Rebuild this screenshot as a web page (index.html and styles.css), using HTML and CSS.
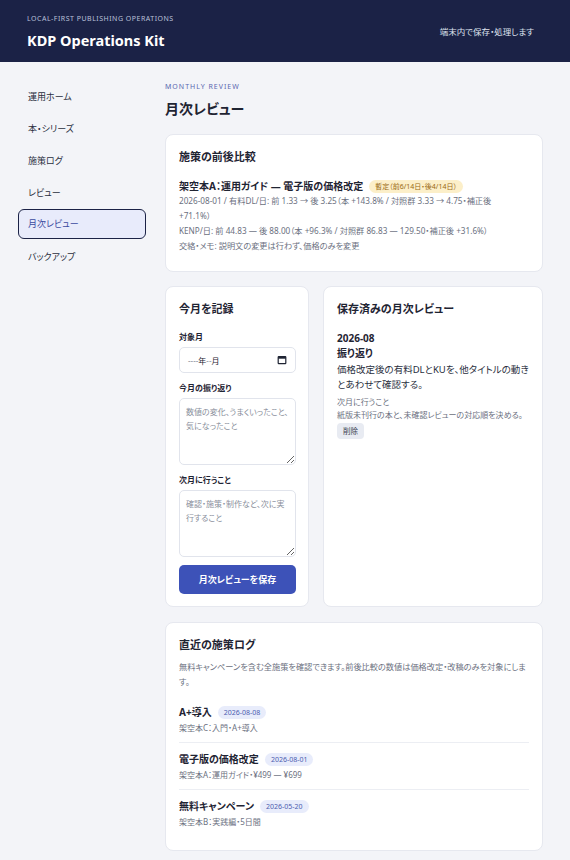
FILE: index.html
```html
<!DOCTYPE html>
<html lang="ja">
<head>
    <meta charset="UTF-8">
    <meta name="viewport" content="width=device-width, initial-scale=1.0">
    <title>KDP Operations Kit</title>
    <link rel="stylesheet" href="styles.css">
</head>
<body>
    <header class="topbar">
        <div class="brand">
            <p class="brand-eyebrow">LOCAL-FIRST PUBLISHING OPERATIONS</p>
            <h1 class="brand-title">KDP Operations Kit</h1>
        </div>
        <p class="topbar-note">端末内で保存・処理します</p>
    </header>

    <div class="layout">
        <nav class="sidebar">
            <a class="nav-item" href="#">運用ホーム</a>
            <a class="nav-item" href="#">本・シリーズ</a>
            <a class="nav-item" href="#">施策ログ</a>
            <a class="nav-item" href="#">レビュー</a>
            <a class="nav-item active" href="#">月次レビュー</a>
            <a class="nav-item" href="#">バックアップ</a>
        </nav>

        <main class="content">
            <p class="eyebrow">MONTHLY REVIEW</p>
            <h2 class="page-title">月次レビュー</h2>

            <section class="card compare">
                <h3 class="card-title">施策の前後比較</h3>
                <div class="compare-head">
                    <strong>架空本A：運用ガイド — 電子版の価格改定</strong>
                    <span class="badge warn">暫定（前6/14日・後4/14日）</span>
                </div>
                <p class="meta">2026-08-01 / 有料DL/日: 前 1.33 → 後 3.25（本 +143.8% / 対照群 3.33 → 4.75・補正後<br>+71.1%）</p>
                <p class="meta">KENP/日: 前 44.83 — 後 88.00（本 +96.3% / 対照群 86.83 — 129.50・補正後 +31.6%）</p>
                <p class="meta">交絡・メモ: 説明文の変更は行わず、価格のみを変更</p>
            </section>

            <div class="review-row">
                <section class="card record">
                    <h3 class="card-title">今月を記録</h3>
                    <label class="field-label" for="month">対象月</label>
                    <div class="month-field" id="month" tabindex="0">
                        <span class="month-text"><span class="dash">----</span>年<span class="dash">--</span>月</span>
                        <svg width="10" height="10" viewBox="0 0 10 10" aria-hidden="true">
                            <rect x="1.2" y="1.7" width="7.6" height="7" rx="0.6" fill="none" stroke="#1f2433" stroke-width="1.2"/>
                            <rect x="1.2" y="1.7" width="7.6" height="2" fill="#1f2433"/>
                        </svg>
                    </div>
                    <label class="field-label" for="looking-back">今月の振り返り</label>
                    <textarea id="looking-back" placeholder="数値の変化、うまくいったこと、気になったこと"></textarea>
                    <label class="field-label" for="next-month">次月に行うこと</label>
                    <textarea id="next-month" placeholder="確認・施策・制作など、次に実行すること"></textarea>
                    <button class="primary-btn" type="button">月次レビューを保存</button>
                </section>

                <section class="card saved">
                    <h3 class="card-title">保存済みの月次レビュー</h3>
                    <p class="saved-month">2026-08</p>
                    <p class="saved-label">振り返り</p>
                    <p class="saved-text">価格改定後の有料DLとKUを、他タイトルの動きとあわせて確認する。</p>
                    <p class="saved-sub">次月に行うこと</p>
                    <p class="saved-sub">紙版未刊行の本と、未確認レビューの対応順を決める。</p>
                    <button class="small-btn" type="button">削除</button>
                </section>
            </div>

            <section class="card log">
                <h3 class="card-title">直近の施策ログ</h3>
                <p class="meta desc">無料キャンペーンを含む全施策を確認できます。前後比較の数値は価格改定・改稿のみを対象にします。</p>
                <ul class="log-list">
                    <li class="log-item">
                        <div class="log-head"><strong>A+導入</strong><span class="badge date">2026-08-08</span></div>
                        <p class="log-sub">架空本C：入門・A+導入</p>
                    </li>
                    <li class="log-item">
                        <div class="log-head"><strong>電子版の価格改定</strong><span class="badge date">2026-08-01</span></div>
                        <p class="log-sub">架空本A：運用ガイド・¥499 — ¥699</p>
                    </li>
                    <li class="log-item">
                        <div class="log-head"><strong>無料キャンペーン</strong><span class="badge date">2026-05-20</span></div>
                        <p class="log-sub">架空本B：実践編・5日間</p>
                    </li>
                </ul>
            </section>
        </main>
    </div>
</body>
</html>
```

FILE: styles.css
```css
* {
    box-sizing: border-box;
}
body {
    margin: 0;
    font-family: "Noto Sans", "Noto Sans CJK JP", sans-serif;
    font-feature-settings: "palt";
    background-color: #f3f4f8;
    color: #1f2433;
}
p, h1, h2, h3, ul {
    margin: 0;
    padding: 0;
}
.topbar {
    height: 62px;
    padding: 0 36px 0 27px;
    background-color: #1b2246;
    color: white;
    display: flex;
    align-items: center;
    justify-content: space-between;
}
.brand-eyebrow {
    font-size: 7px;
    line-height: 10px;
    letter-spacing: 0.5px;
    color: #b9c0d9;
    margin-top: 2px;
}
.brand-title {
    font-size: 14.5px;
    line-height: 22px;
    font-weight: 700;
    margin-top: 5px;
}
.topbar-note {
    font-size: 8.5px;
    color: #dfe3ef;
}
.layout {
    display: grid;
    grid-template-columns: 160px 1fr;
}
.sidebar {
    padding: 18px 14px 0 18px;
    display: flex;
    flex-direction: column;
}
.nav-item {
    display: block;
    height: 32px;
    line-height: 32px;
    padding: 0 9px;
    font-size: 9px;
    color: #2a2f3e;
    text-decoration: none;
    border: 1.5px solid transparent;
    border-radius: 6px;
}
.nav-item.active {
    height: 30px;
    line-height: 27px;
    margin: 1px 0;
    border-color: #1b2246;
    background-color: #e8ebfb;
    color: #3b4aa0;
}
.content {
    padding: 20px 27px 20px 5px;
}
.eyebrow {
    font-size: 7px;
    line-height: 10px;
    letter-spacing: 1px;
    color: #5a67b0;
}
.page-title {
    font-size: 14px;
    line-height: 22px;
    font-weight: 700;
    margin: 6px 0 14px;
}
.card {
    background-color: white;
    border: 1px solid #e6e8ef;
    border-radius: 8px;
    padding: 14px 13px;
}
.card-title {
    font-size: 11px;
    line-height: 16px;
    font-weight: 700;
}
.compare {
    padding-bottom: 18px;
}
.compare-head {
    display: flex;
    align-items: center;
    gap: 6px;
    margin-top: 14px;
    font-size: 10px;
    line-height: 14px;
}
.badge {
    display: inline-block;
    font-size: 7px;
    line-height: 11px;
    padding: 1px 6px;
    border-radius: 8px;
}
.badge.warn {
    background-color: #fcefc9;
    color: #9a6a12;
}
.badge.date {
    background-color: #e8ecfb;
    color: #4b5cb0;
}
.meta {
    font-size: 8.2px;
    line-height: 15px;
    color: #6b7080;
}
.review-row {
    display: grid;
    grid-template-columns: 144px 1fr;
    gap: 14px;
    margin: 14px 0 15px;
}
.record {
    display: flex;
    flex-direction: column;
    padding: 14px 12px 12px 13px;
}
.field-label {
    font-size: 8px;
    line-height: 12px;
    font-weight: 700;
    margin: 9px 0 4px;
}
.record .card-title + .field-label {
    margin-top: 14px;
}
.month-field {
    display: flex;
    align-items: center;
    justify-content: space-between;
    height: 26px;
    padding: 0 8px;
    border: 1px solid #e1e4ec;
    border-radius: 5px;
    font-size: 8px;
    color: #1f2433;
}
.month-field .dash {
    color: #8a8f9c;
}
textarea {
    height: 67px;
    resize: vertical;
    padding: 6px 6px;
    border: 1px solid #e1e4ec;
    border-radius: 5px;
    font-family: inherit;
    font-feature-settings: "palt";
    font-size: 8px;
    line-height: 14px;
    color: #1f2433;
}
textarea::placeholder {
    color: #8a8f9c;
}
.primary-btn {
    margin-top: 8px;
    height: 29px;
    border: none;
    border-radius: 5px;
    background-color: #3d52b8;
    color: white;
    font-family: inherit;
    font-feature-settings: "palt";
    font-size: 9px;
    font-weight: 700;
}
.saved {
    display: flex;
    flex-direction: column;
    align-items: flex-start;
}
.saved-month {
    margin-top: 14px;
    font-size: 10px;
    line-height: 15px;
    font-weight: 700;
}
.saved-label {
    font-size: 10px;
    line-height: 15px;
    font-weight: 700;
}
.saved-text {
    font-size: 9.5px;
    line-height: 15px;
    margin-top: 1px;
    color: #2a2f3e;
}
.saved-sub {
    font-size: 8px;
    line-height: 13px;
    color: #6b7080;
}
.saved-text + .saved-sub {
    margin-top: 3px;
}
.small-btn {
    margin-top: 2px;
    padding: 2px 6px;
    border: none;
    border-radius: 4px;
    background-color: #e8ebf2;
    color: #3a3f4e;
    font-family: inherit;
    font-feature-settings: "palt";
    font-size: 7.5px;
    line-height: 12px;
}
.log .desc {
    margin: 6px 0 7px;
}
.log-list {
    list-style: none;
}
.log-item {
    padding: 9px 0 8px;
    border-bottom: 1px solid #eceef3;
}
.log-item:last-child {
    border-bottom: none;
}
.log-head {
    display: flex;
    align-items: center;
    gap: 6px;
    font-size: 10px;
    line-height: 14px;
}
.log-sub {
    margin-top: 3px;
    font-size: 8px;
    line-height: 12px;
    color: #6b7080;
}
```
